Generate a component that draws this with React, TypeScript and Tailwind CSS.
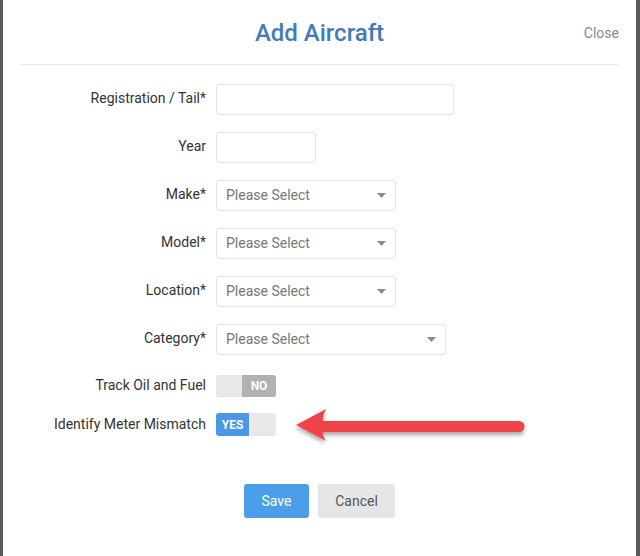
import React from 'react';

const font = { fontFamily: 'Roboto, "Noto Sans", sans-serif' };

const Caret = () => (
  <svg width="9" height="5" viewBox="0 0 9 5" className="shrink-0">
    <path d="M0 0 L9 0 L4.5 5 Z" fill="#8a8a8a" />
  </svg>
);

const Row = ({ label, children, lift = '-mt-[4px]' }: { label: string; children: React.ReactNode; lift?: string }) => (
  <div className="flex items-center">
    <div className={`w-[213px] pr-[10px] text-right text-[14px] text-[#333] leading-none ${lift}`}>{label}</div>
    {children}
  </div>
);

const Select = ({ w }: { w: string }) => (
  <div className={`${w} h-[31px] border border-[#e3e3e3] rounded-[3px] flex items-center justify-between pl-[9px] pr-[9px] text-[14px] text-[#777]`}>
    <span>Please Select</span>
    <Caret />
  </div>
);

const Arrow = () => (
  <svg className="absolute left-[288px] top-[402px]" width="250" height="50" viewBox="288 402 250 50">
    <defs>
      <filter id="sh" x="-10%" y="-40%" width="120%" height="180%">
        <feDropShadow dx="0" dy="3" stdDeviation="2" floodColor="#000" floodOpacity="0.35" />
      </filter>
    </defs>
    <g filter="url(#sh)" fill="#f0434a">
      <path d="M296 425 L326 409 Q322 417 323 421 L519 421 A5.5 5.5 0 0 1 519 432 L323 432 Q322 436 326 441 Z" />
    </g>
  </svg>
);

export default function App() {
  return (
    <div className="w-[640px] h-[556px] bg-[#5a5a5a] pl-[3px] pr-[4px] relative" style={font}>
      <div className="bg-white h-full">
        <div className="mx-[17px] h-[65px] border-b border-[#ececec] flex items-center relative">
          <h1 className="w-full text-center text-[24px] font-medium text-[#4479ba] leading-none mt-[2px]">Add Aircraft</h1>
          <span className="absolute right-[0px] top-[23px] text-[14px] text-[#8a8a8a]">Close</span>
        </div>

        <div className="flex flex-col gap-[17px] pt-[19px]">
          <Row label="Registration / Tail*">
            <div className="w-[238px] h-[31px] border border-[#e3e3e3] rounded-[3px]" />
          </Row>
          <Row label="Year">
            <div className="w-[100px] h-[31px] border border-[#e3e3e3] rounded-[3px]" />
          </Row>
          <Row label="Make*">
            <Select w="w-[180px]" />
          </Row>
          <Row label="Model*">
            <Select w="w-[180px]" />
          </Row>
          <Row label="Location*">
            <Select w="w-[180px]" />
          </Row>
          <Row label="Category*">
            <Select w="w-[230px]" />
          </Row>
        </div>

        <div className="flex flex-col gap-[16px] mt-[20px]">
          <Row label="Track Oil and Fuel" lift="-mt-[2px]">
            <div className="w-[60px] h-[22px] rounded-[3px] overflow-hidden flex">
              <div className="w-[26px] bg-[#e8e8e8]" />
              <div className="flex-1 bg-[#b1b1b1] text-white text-[12px] font-bold flex items-center justify-center">NO</div>
            </div>
          </Row>
          <Row label="Identify Meter Mismatch" lift="-mt-[2px]">
            <div className="w-[60px] h-[23px] rounded-[3px] overflow-hidden flex">
              <div className="w-[33px] bg-[#4a98e6] text-white text-[12px] font-bold flex items-center justify-center">YES</div>
              <div className="flex-1 bg-[#e8e8e8]" />
            </div>
          </Row>
        </div>

        <div className="flex justify-center gap-[9px] mt-[48px]">
          <button className="w-[65px] h-[34px] rounded-[3px] bg-[#4b9fea] text-white text-[14px]">Save</button>
          <button className="w-[77px] h-[34px] rounded-[3px] bg-[#e6e6e6] text-[#555] text-[14px]">Cancel</button>
        </div>
      </div>
      <Arrow />
    </div>
  );
}
